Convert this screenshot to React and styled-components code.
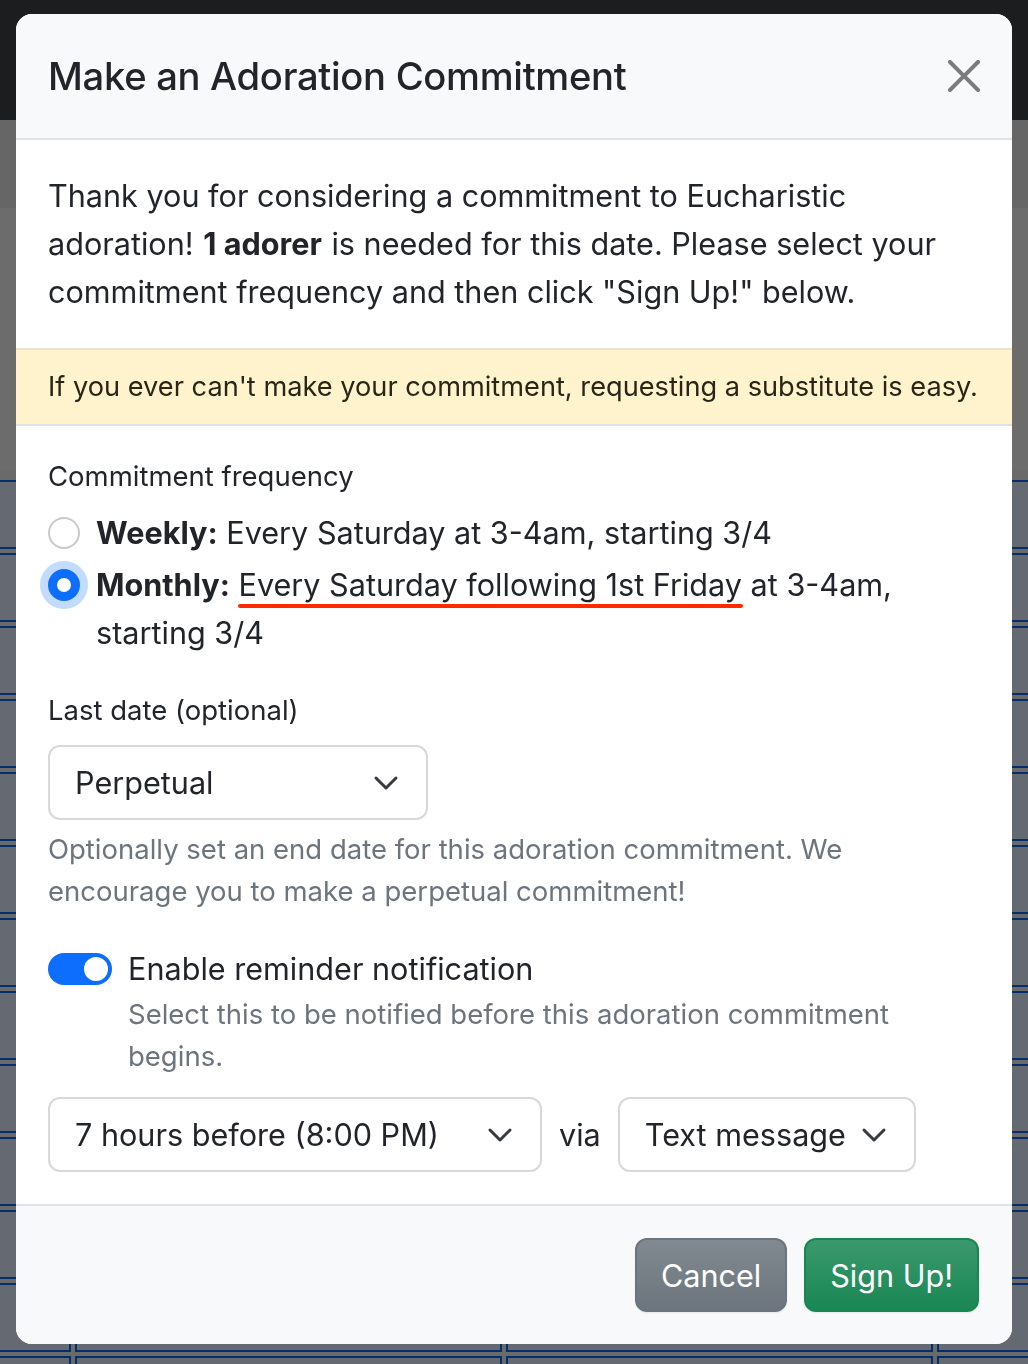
import styled, { createGlobalStyle } from 'styled-components';

const GlobalStyle = createGlobalStyle`
  html, body {
    margin: 0;
    padding: 0;
  }
  body {
    font-family: Inter, "Noto Sans", "Liberation Sans", sans-serif;
    color: #212529;
    background: #d4d4d4;
    overflow: hidden;
  }
  * {
    box-sizing: border-box;
  }
`;

// ---- page behind the modal ----

const Page = styled.div`
  height: 1364px;
  overflow: hidden;
`;

const NavBar = styled.div`
  height: 120px;
  background: #363a3f;
`;

const Band = styled.div`
  height: ${(props) => props.h}px;
  background: ${(props) => props.bg};
`;

const Calendar = styled.div`
  display: grid;
  grid-template-columns: 111px 427px 427px 1fr;
  grid-auto-rows: 69px;
  gap: 4px;
  margin: 10px 0 0 -40px;
  width: 1120px;
`;

const Cell = styled.div`
  border: 2px solid #0b5ed7;
  background: #cbd5e4;
`;

const Backdrop = styled.div`
  position: fixed;
  inset: 0;
  background: rgba(0, 0, 0, 0.5);
`;

// ---- modal ----

const ModalWrap = styled.div`
  position: fixed;
  inset: 0;
  padding: 14px 16px;
`;

const Modal = styled.div`
  background: #fff;
  border-radius: 16px;
  overflow: hidden;
  display: flex;
  flex-direction: column;
`;

const Header = styled.div`
  display: flex;
  align-items: center;
  justify-content: space-between;
  padding: 32px 32px;
  background: #f8f9fa;
  border-bottom: 2px solid #dee2e6;
`;

const Title = styled.h5`
  margin: 0;
  font-size: 38.2px;
  font-weight: 500;
  line-height: 60px;
  letter-spacing: -0.3px;
`;

const CloseButton = styled.button`
  width: 32px;
  height: 32px;
  padding: 0;
  border: 0;
  background: transparent;
  opacity: 0.5;
  display: flex;
  align-items: center;
  justify-content: center;
`;

const Body = styled.div`
  padding: ${(props) => props.pt || 32}px 32px 32px;
  font-size: 30.6px;
  line-height: 48px;
`;

const Intro = styled.p`
  margin: 0;

  b {
    margin: 0 1px;
  }
`;

const Alert = styled.div`
  background: #fff3cd;
  border-top: 2px solid #e9e3d0;
  border-bottom: 2px solid #dee2e6;
  padding: 16px 32px;
  font-size: 27.2px;
  line-height: 42px;
  color: #2a2617;
  white-space: nowrap;
`;

const Group = styled.div`
  margin-bottom: ${(props) => props.mb || 32}px;
`;

const Label = styled.div`
  font-size: 27.5px;
  line-height: 42px;
  margin-bottom: ${(props) => props.mb || 8}px;
`;

const Check = styled.div`
  display: flex;
  align-items: flex-start;
  gap: 16px;
  margin-bottom: 4px;
`;

const Radio = styled.span`
  flex: none;
  width: 32px;
  height: 32px;
  margin-top: 8px;
  border-radius: 50%;
  border: 2px solid ${(props) => (props.checked ? '#0d6efd' : '#c9c9c9')};
  background: ${(props) => (props.checked ? '#0d6efd' : '#fff')};
  box-shadow: ${(props) => (props.checked ? '0 0 0 8px rgba(13,110,253,.25)' : 'none')};
  display: flex;
  align-items: center;
  justify-content: center;

  &::after {
    content: '';
    display: ${(props) => (props.checked ? 'block' : 'none')};
    width: 14px;
    height: 14px;
    border-radius: 50%;
    background: #fff;
  }
`;

const CheckText = styled.div`
  b {
    font-weight: 700;
  }
`;

const Marked = styled.span`
  position: relative;

  &::after {
    content: '';
    position: absolute;
    left: -1px;
    right: -1px;
    bottom: -5px;
    height: 4px;
    border-radius: 2px;
    background: #ff2a00;
  }
`;

const Select = styled.div`
  display: flex;
  align-items: center;
  justify-content: space-between;
  width: ${(props) => props.w}px;
  height: 75px;
  padding: 0 24px 0 25px;
  border: 2px solid #d6d9dc;
  border-radius: 12px;
  background: #fff;
  font-size: 30.6px;
  line-height: 48px;
  flex: none;
`;

const HelpText = styled.div`
  margin-top: ${(props) => (props.mt === undefined ? 8 : props.mt)}px;
  font-size: 27.5px;
  line-height: 42px;
  color: #6c757d;
`;

const SwitchRow = styled.div`
  display: flex;
  align-items: flex-start;
  gap: 16px;
`;

const Switch = styled.span`
  flex: none;
  width: 64px;
  height: 32px;
  margin-top: 8px;
  border-radius: 16px;
  background: #0d6efd;
  display: flex;
  align-items: center;
  justify-content: flex-end;
  padding-right: 4px;

  &::after {
    content: '';
    width: 24px;
    height: 24px;
    border-radius: 50%;
    background: #fff;
  }
`;

const InlineRow = styled.div`
  display: flex;
  align-items: center;
  gap: 17px;
`;

const Footer = styled.div`
  display: flex;
  justify-content: flex-end;
  gap: 17px;
  padding: 32px 33px 32px;
  background: #f8f9fa;
  border-top: 2px solid #dee2e6;
`;

const Button = styled.button`
  height: 74px;
  padding: 0 24px;
  border-radius: 12px;
  border: 2px solid ${(props) => props.bg};
  color: #fff;
  font-family: inherit;
  font-size: 30.6px;
  background: ${(props) => props.bg}
    linear-gradient(180deg, rgba(255, 255, 255, 0.15), rgba(255, 255, 255, 0));
  box-shadow: 0 1px 2px rgba(0, 0, 0, 0.08);
`;

function Chevron() {
  return (
    <svg width="32" height="24" viewBox="0 0 16 12" fill="none">
      <path d="M3 3.5l5 5 5-5" stroke="#343a40" strokeWidth="1.5" strokeLinecap="round" strokeLinejoin="round" />
    </svg>
  );
}

function CloseIcon() {
  return (
    <svg width="32" height="32" viewBox="0 0 16 16">
      <path
        d="M.293.293a1 1 0 0 1 1.414 0L8 6.586 14.293.293a1 1 0 1 1 1.414 1.414L9.414 8l6.293 6.293a1 1 0 0 1-1.414 1.414L8 9.414l-6.293 6.293a1 1 0 0 1-1.414-1.414L6.586 8 .293 1.707a1 1 0 0 1 0-1.414z"
        fill="#000"
      />
    </svg>
  );
}

function App() {
  const cells = Array.from({ length: 52 });
  return (
    <>
      <GlobalStyle />
      <Page>
        <NavBar />
        <Band h={88} bg="#cdcdcd" />
        <Band h={262} bg="#d9d9d9" />
        <Calendar>
          {cells.map((_, i) => (
            <Cell key={i} />
          ))}
        </Calendar>
      </Page>
      <Backdrop />
      <ModalWrap>
        <Modal>
          <Header>
            <Title>Make an Adoration Commitment</Title>
            <CloseButton aria-label="Close">
              <CloseIcon />
            </CloseButton>
          </Header>
          <Body>
            <Intro>
              Thank you for considering a commitment to Eucharistic adoration! <b>1 adorer</b> is needed for this
              date. Please select your commitment frequency and then click "Sign Up!" below.
            </Intro>
          </Body>
          <Alert>If you ever can't make your commitment, requesting a substitute is easy.</Alert>
          <Body pt={29}>
            <Group>
              <Label mb={12}>Commitment frequency</Label>
              <Check>
                <Radio />
                <CheckText>
                  <b>Weekly:</b> Every Saturday at 3-4am, starting 3/4
                </CheckText>
              </Check>
              <Check>
                <Radio checked />
                <CheckText>
                  <b>Monthly:</b> <Marked>Every Saturday following 1st Friday</Marked> at 3-4am, starting 3/4
                </CheckText>
              </Check>
            </Group>
            <Group mb={33}>
              <Label mb={14}>Last date (optional)</Label>
              <Select w={380}>
                Perpetual
                <Chevron />
              </Select>
              <HelpText>
                Optionally set an end date for this adoration commitment. We encourage you to make a perpetual
                commitment!
              </HelpText>
            </Group>
            <Group mb={20}>
              <SwitchRow>
                <Switch />
                <div>
                  <div>Enable reminder notification</div>
                  <HelpText mt={0}>Select this to be notified before this adoration commitment begins.</HelpText>
                </div>
              </SwitchRow>
            </Group>
            <InlineRow>
              <Select w={494}>
                7 hours before (8:00 PM)
                <Chevron />
              </Select>
              <span>via</span>
              <Select w={298}>
                Text message
                <Chevron />
              </Select>
            </InlineRow>
          </Body>
          <Footer>
            <Button bg="#6c757d">Cancel</Button>
            <Button bg="#198754">Sign Up!</Button>
          </Footer>
        </Modal>
      </ModalWrap>
    </>
  );
}

export default App;
